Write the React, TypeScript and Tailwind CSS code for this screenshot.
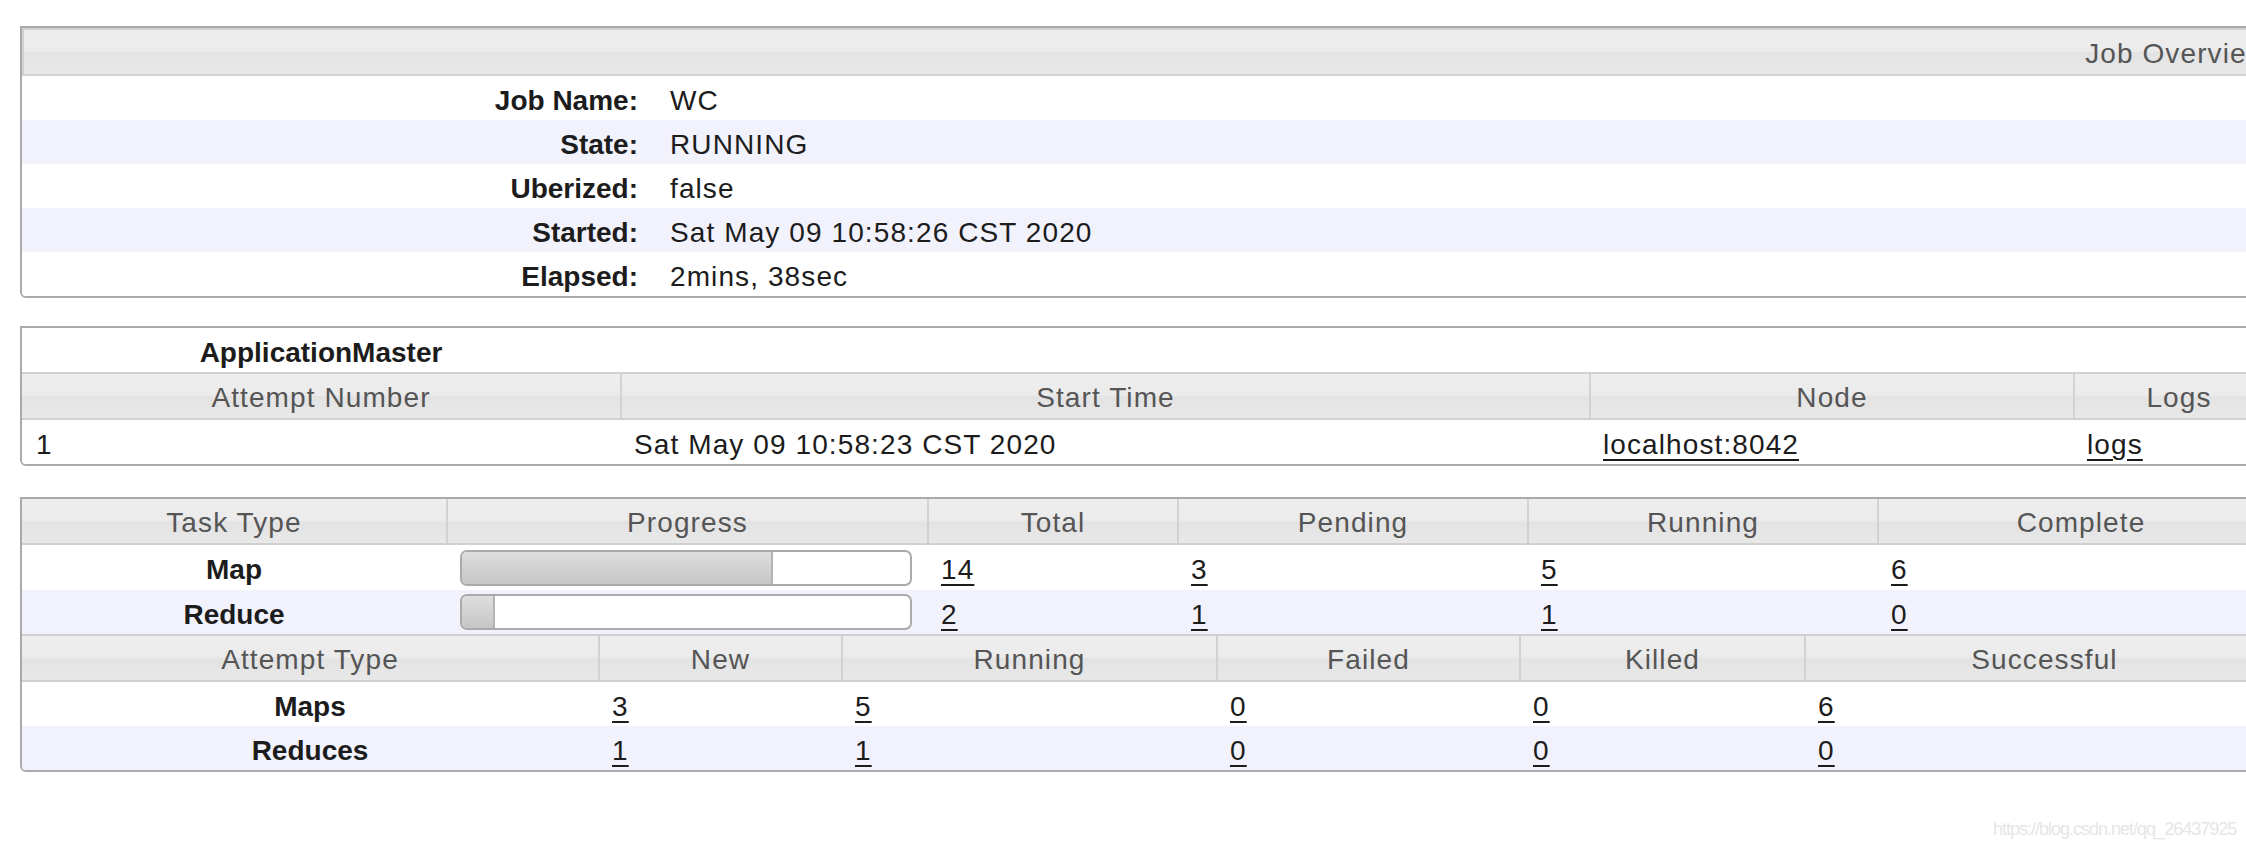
import React from "react";

const HDR =
  "bg-[linear-gradient(180deg,#eeeeee_0%,#ebebeb_48%,#e3e3e3_52%,#e8e8e8_100%)]";

function Link({ children }: { children: React.ReactNode }) {
  return (
    <span className="underline decoration-[2px] underline-offset-[5px] text-[#1c1c1c]">
      {children}
    </span>
  );
}

function Th({
  w,
  first,
  children,
}: {
  w: string;
  first?: boolean;
  children: React.ReactNode;
}) {
  return (
    <div
      className={`${w} shrink-0 flex items-center justify-center pt-[4px] tracking-[1.1px] text-[#555555] ${
        first ? "" : "border-l-2 border-[#d2d2d2]"
      }`}
    >
      {children}
    </div>
  );
}

function Td({ w, children }: { w: string; children?: React.ReactNode }) {
  return (
    <div className={`${w} shrink-0 flex items-center pt-[5px] pl-[14px] tracking-[1.1px]`}>
      {children}
    </div>
  );
}

function Bar({ fill }: { fill: string }) {
  return (
    <div className="ml-[14px] w-[452px] h-[36px] border-2 border-[#aaaaaa] rounded-[7px] bg-white overflow-hidden flex">
      <div
        className={`${fill} h-full bg-[linear-gradient(180deg,#dedede_0%,#cfcfcf_60%,#c6c6c6_100%)] border-r-2 border-[#b4b4b4]`}
      />
    </div>
  );
}

function BoldCell({ w, children }: { w: string; children: React.ReactNode }) {
  return (
    <div className={`${w} shrink-0 flex items-center justify-center pt-[5px] font-bold`}>
      {children}
    </div>
  );
}

export default function App() {
  const overview: [string, string][] = [
    ["Job Name:", "WC"],
    ["State:", "RUNNING"],
    ["Uberized:", "false"],
    ["Started:", "Sat May 09 10:58:26 CST 2020"],
    ["Elapsed:", "2mins, 38sec"],
  ];

  return (
    <div className="relative w-[2246px] h-[848px] overflow-hidden bg-white font-['Liberation_Sans',Arial,sans-serif] text-[28px] text-[#1c1c1c] leading-none">
      <div className="pt-[26px] pl-[20px]">
        {/* Job Overview */}
        <div className="w-[2265px] border-2 border-[#aaaaaa] rounded-b-[6px] overflow-hidden">
          <div
            className={`h-[48px] border-2 border-[#d0d0d0] ${HDR} flex items-center justify-end pt-[4px] pr-[13px] tracking-[1.1px] text-[#555555]`}
          >
            Job Overview
          </div>
          {overview.map(([k, v], i) => (
            <div
              key={k}
              className={`h-[44px] flex items-center pt-[6px] ${
                i % 2 === 1 ? "bg-[#f2f2fd]" : "bg-white"
              }`}
            >
              <div className="w-[632px] shrink-0 text-right pr-[16px] font-bold">
                {k}
              </div>
              <div className="pl-[16px] tracking-[1.1px]">{v}</div>
            </div>
          ))}
        </div>

        {/* ApplicationMaster */}
        <div className="mt-[28px] w-[2265px] border-2 border-[#aaaaaa] rounded-b-[6px] overflow-hidden">
          <div className="h-[44px] flex items-center pt-[6px]">
            <div className="w-[598px] text-center font-bold">ApplicationMaster</div>
          </div>
          <div className={`h-[48px] flex border-y-2 border-[#d0d0d0] ${HDR}`}>
            <Th w="w-[598px]" first>
              Attempt Number
            </Th>
            <Th w="w-[969px]">Start Time</Th>
            <Th w="w-[484px]">Node</Th>
            <Th w="w-[210px]">Logs</Th>
          </div>
          <div className="h-[44px] flex bg-white">
            <Td w="w-[598px]">1</Td>
            <Td w="w-[969px]">Sat May 09 10:58:23 CST 2020</Td>
            <Td w="w-[484px]">
              <Link>localhost:8042</Link>
            </Td>
            <Td w="w-[210px]">
              <Link>logs</Link>
            </Td>
          </div>
        </div>

        {/* Tasks */}
        <div className="mt-[31px] w-[2265px] border-2 border-[#aaaaaa] rounded-b-[6px] overflow-hidden">
          <div className={`h-[46px] flex border-b-2 border-[#d0d0d0] ${HDR}`}>
            <Th w="w-[424px]" first>
              Task Type
            </Th>
            <Th w="w-[481px]">Progress</Th>
            <Th w="w-[250px]">Total</Th>
            <Th w="w-[350px]">Pending</Th>
            <Th w="w-[350px]">Running</Th>
            <Th w="w-[406px]">Complete</Th>
          </div>
          <div className="h-[45px] flex bg-white">
            <BoldCell w="w-[424px]">Map</BoldCell>
            <div className="w-[481px] shrink-0 flex items-center">
              <Bar fill="w-[311px]" />
            </div>
            <Td w="w-[250px]">
              <Link>14</Link>
            </Td>
            <Td w="w-[350px]">
              <Link>3</Link>
            </Td>
            <Td w="w-[350px]">
              <Link>5</Link>
            </Td>
            <Td w="w-[406px]">
              <Link>6</Link>
            </Td>
          </div>
          <div className="h-[44px] flex bg-[#f2f2fd]">
            <BoldCell w="w-[424px]">Reduce</BoldCell>
            <div className="w-[481px] shrink-0 flex items-center">
              <Bar fill="w-[33px]" />
            </div>
            <Td w="w-[250px]">
              <Link>2</Link>
            </Td>
            <Td w="w-[350px]">
              <Link>1</Link>
            </Td>
            <Td w="w-[350px]">
              <Link>1</Link>
            </Td>
            <Td w="w-[406px]">
              <Link>0</Link>
            </Td>
          </div>
          <div className={`h-[48px] flex border-y-2 border-[#d0d0d0] ${HDR}`}>
            <Th w="w-[576px]" first>
              Attempt Type
            </Th>
            <Th w="w-[243px]">New</Th>
            <Th w="w-[375px]">Running</Th>
            <Th w="w-[303px]">Failed</Th>
            <Th w="w-[285px]">Killed</Th>
            <Th w="w-[479px]">Successful</Th>
          </div>
          <div className="h-[44px] flex bg-white">
            <BoldCell w="w-[576px]">Maps</BoldCell>
            <Td w="w-[243px]">
              <Link>3</Link>
            </Td>
            <Td w="w-[375px]">
              <Link>5</Link>
            </Td>
            <Td w="w-[303px]">
              <Link>0</Link>
            </Td>
            <Td w="w-[285px]">
              <Link>0</Link>
            </Td>
            <Td w="w-[479px]">
              <Link>6</Link>
            </Td>
          </div>
          <div className="h-[44px] flex bg-[#f2f2fd]">
            <BoldCell w="w-[576px]">Reduces</BoldCell>
            <Td w="w-[243px]">
              <Link>1</Link>
            </Td>
            <Td w="w-[375px]">
              <Link>1</Link>
            </Td>
            <Td w="w-[303px]">
              <Link>0</Link>
            </Td>
            <Td w="w-[285px]">
              <Link>0</Link>
            </Td>
            <Td w="w-[479px]">
              <Link>0</Link>
            </Td>
          </div>
        </div>
      </div>

      <div className="absolute left-[1993px] top-[820px] text-[18px] tracking-[-1px] text-[#e6e6e6] leading-none">
        https://blog.csdn.net/qq_26437925
      </div>
    </div>
  );
}
